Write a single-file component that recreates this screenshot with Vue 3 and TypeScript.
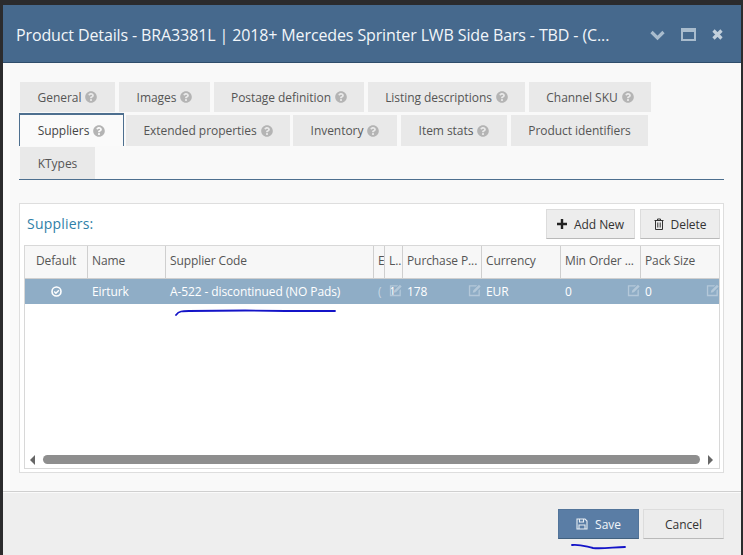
<script setup lang="ts">
const helpPath =
  'M504 256c0 137-111 248-248 248S8 393 8 256C8 119 119 8 256 8s248 111 248 248zM263 90c-54 0-89 23-117 64-3 5-2 12 3 16l35 26c5 4 13 3 17-2 18-23 30-36 57-36 20 0 46 13 46 33 0 15-12 23-33 34-24 13-55 30-55 71v4c0 7 5 12 12 12h56c7 0 12-5 12-12v-1c0-29 83-30 83-107 0-58-60-102-116-102zM256 338c-25 0-46 21-46 46s21 46 46 46 46-21 46-46-21-46-46-46z'
const editPath = 'M1 2.500h9.500L9 4H2.500v9.500H12V8.500l1.500-1.500V15H1zM6 8.500l6.500-6.500L14.500 4 8 10.500l-2.600.6z'

interface Tab { label: string; width: number; help: boolean; active?: boolean; after: number }
const rows: Tab[][] = [
  [
    { label: 'General', width: 95, help: true, after: 4 },
    { label: 'Images', width: 91, help: true, after: 4 },
    { label: 'Postage definition', width: 150, help: true, after: 4 },
    { label: 'Listing descriptions', width: 157, help: true, after: 4 },
    { label: 'Channel SKU', width: 122, help: true, after: 0 },
  ],
  [
    { label: 'Suppliers', width: 105, help: true, active: true, after: 2 },
    { label: 'Extended properties', width: 164, help: true, after: 3 },
    { label: 'Inventory', width: 104, help: true, after: 4 },
    { label: 'Item stats', width: 106, help: true, after: 4 },
    { label: 'Product identifiers', width: 137, help: false, after: 0 },
  ],
  [{ label: 'KTypes', width: 75, help: false, after: 0 }],
]

interface Col { head: string; cell: string; width: number; edit: boolean; center?: boolean; faint?: boolean }
const cols: Col[] = [
  { head: 'Default', cell: '', width: 63, edit: false, center: true },
  { head: 'Name', cell: 'Eirturk', width: 78, edit: false },
  { head: 'Supplier Code', cell: 'A-522 - discontinued (NO Pads)', width: 208, edit: false },
  { head: 'E', cell: '(', width: 11, edit: false, faint: true },
  { head: 'L..', cell: '1', width: 18, edit: true },
  { head: 'Purchase P...', cell: '178', width: 79, edit: true },
  { head: 'Currency', cell: 'EUR', width: 79, edit: false },
  { head: 'Min Order ...', cell: '0', width: 80, edit: true },
  { head: 'Pack Size', cell: '0', width: 79, edit: true },
]
</script>

<template>
  <div class="screen">
    <section class="dialog">
      <header class="titlebar">
        <h1 class="title">Product Details - BRA3381L | 2018+ Mercedes Sprinter LWB Side Bars - TBD - (C...</h1>
        <div class="controls">
          <svg width="15" height="12" viewBox="0 0 15 12"><path d="M1.500 3l6 6 6-6" fill="none" stroke="#a9bccd" stroke-width="3.200" /></svg>
          <svg width="15" height="13" viewBox="0 0 15 13"><path d="M1 1h13v11H1z M1 3h13" fill="none" stroke="#a9bccd" stroke-width="2" /></svg>
          <svg width="11" height="11" viewBox="0 0 11 11"><path d="M1.500 1.500l8 8M9.500 1.500l-8 8" fill="none" stroke="#c3d0dc" stroke-width="3.200" /></svg>
        </div>
      </header>

      <main class="body">
        <nav class="tabs">
          <div v-for="(row, r) in rows" :key="r" class="tab-row" :class="'tab-row-' + r">
            <button
              v-for="tab in row"
              :key="tab.label"
              class="tab"
              :class="{ active: tab.active }"
              :style="{ width: tab.width + 'px', marginRight: tab.after + 'px' }"
            >
              {{ tab.label }}
              <svg v-if="tab.help" class="help" viewBox="0 0 512 512"><path :d="helpPath" /></svg>
            </button>
          </div>
        </nav>

        <section class="panel">
          <div class="panel-head">
            <span class="panel-title">Suppliers:</span>
            <div class="panel-actions">
              <button class="btn add">
                <svg width="10" height="10" viewBox="0 0 10 10"><path d="M5 0v10M0 5h10" stroke="#222" stroke-width="2.400" /></svg>
                Add New
              </button>
              <button class="btn del">
                <svg width="10" height="12" viewBox="0 0 10 12"><path d="M.5 2.500h9M3.500 2.500V1h3v1.500M1.500 2.500V11.500h7V2.500M3.800 4.500v5M6.200 4.500v5" fill="none" stroke="#333" /></svg>
                Delete
              </button>
            </div>
          </div>

          <div class="grid">
            <div class="grid-row head">
              <div v-for="c in cols" :key="c.head" class="th" :class="{ center: c.center }" :style="{ width: c.width + 'px' }">{{ c.head }}</div>
            </div>
            <div class="grid-row selected">
              <div v-for="c in cols" :key="c.head" class="td" :class="{ center: c.center, faint: c.faint }" :style="{ width: c.width + 'px' }">
                <svg v-if="c.center" width="11" height="11" viewBox="0 0 11 11">
                  <circle cx="5.500" cy="5.500" r="4.500" fill="none" stroke="#fff" stroke-width="1.600" />
                  <path d="M3.200 5.500l1.700 1.700 3-3" fill="none" stroke="#fff" stroke-width="1.500" />
                </svg>
                <span class="cell-text">{{ c.cell }}</span>
                <svg v-if="c.edit" class="edit" viewBox="0 0 16 16"><path :d="editPath" /></svg>
              </div>
            </div>
            <div class="grid-fill"></div>
            <div class="scrollbar">
              <span class="arrow left"></span>
              <span class="thumb"></span>
              <span class="arrow right"></span>
            </div>
          </div>
          <svg class="scribble code-scribble" width="165" height="10" viewBox="0 0 165 10">
            <path d="M1 7C4 3 7 3 14 3L70 2.500 110 3 160 3" fill="none" stroke="#1414c8" stroke-width="1.800" stroke-linecap="round" />
          </svg>
        </section>
      </main>

      <footer class="footer">
        <button class="btn save">
          <svg width="12" height="12" viewBox="0 0 12 12"><path d="M1 1h8l2 2v8H1zM3.500 1v3h4V1M3 11V7h6v4" fill="none" stroke="#e8eef4" stroke-width="1.100" /></svg>
          Save
        </button>
        <button class="btn cancel">Cancel</button>
        <svg class="scribble save-scribble" width="56" height="8" viewBox="0 0 56 8">
          <path d="M1 2C8 1 13 3 22 5 32 6 44 4 54 4" fill="none" stroke="#1414c8" stroke-width="1.800" stroke-linecap="round" />
        </svg>
      </footer>
    </section>
  </div>
</template>

<style>
html, body { margin: 0; background: #2b2b2d; }
</style>

<style scoped>
.screen {
  width: 743px;
  height: 555px;
  box-sizing: border-box;
  padding: 5px 2px 0 3px;
  background: #2b2b2d;
  overflow: hidden;
  font-family: "Open Sans", "Liberation Sans", sans-serif;
}
.dialog {
  height: 550px;
  display: flex;
  flex-direction: column;
  background: #f9f9f9;
}
.titlebar {
  height: 58px;
  flex: none;
  box-sizing: border-box;
  display: flex;
  align-items: center;
  padding: 2px 18px 0 13px;
  background: #46698d;
  border-bottom: 1px solid #2f4d6b;
}
.title {
  margin: 0;
  flex: 1;
  font-size: 16px;
  letter-spacing: -0.12px;
  font-weight: 400;
  color: #f2f6fa;
  white-space: nowrap;
}
.controls {
  display: flex;
  align-items: center;
  gap: 16px;
}
.body {
  flex: 1;
  min-height: 0;
  padding: 19px 17px 18px 16px;
  display: flex;
  flex-direction: column;
  border-bottom: 1px solid #cfcfcf;
}
.tabs {
  height: 97px;
  box-sizing: content-box;
  border-bottom: 1px solid #4d6f8f;
  display: flex;
  flex-direction: column;
}
.tab-row {
  display: flex;
  height: 32px;
}
.tab-row-0 { padding-left: 1px; height: 32px; }
.tab-row-1 { height: 33px; }
.tab-row-2 { padding-left: 1px; height: 32px; }
.tab {
  height: 30px;
  box-sizing: border-box;
  padding: 0;
  border: 0;
  background: #e9e9e9;
  color: #555;
  font: 400 12px "Open Sans", "Liberation Sans", sans-serif;
  letter-spacing: -0.05px;
  display: flex;
  align-items: center;
  justify-content: center;
  gap: 4px;
  white-space: nowrap;
  flex: none;
}
.tab-row-1 .tab { height: 31px; margin-top: 1px; }
.tab-row-2 .tab { height: 32px; }
.tab-row-1 .tab.active {
  height: 33px;
  margin-top: -1px;
  background: #fafafa;
  border: 1px solid #4d6f8f;
  border-bottom: 0;
  border-top-width: 2px;
  color: #444;
}
.help {
  width: 12px;
  height: 12px;
  fill: #b4b4b4;
  flex: none;
}
.panel {
  position: relative;
  margin-top: 23px;
  height: 270px;
  box-sizing: border-box;
  border: 1px solid #dedede;
  background: #fff;
  padding: 5px 3px 3px 4px;
  display: flex;
  flex-direction: column;
}
.panel-head {
  height: 36px;
  flex: none;
  display: flex;
  justify-content: space-between;
}
.panel-title {
  padding: 5px 0 0 3px;
  font-size: 14px;
  letter-spacing: 0.2px;
  color: #2f7fa8;
}
.panel-actions {
  display: flex;
  gap: 5px;
  height: 30px;
}
.btn {
  box-sizing: border-box;
  height: 30px;
  padding: 0;
  display: flex;
  align-items: center;
  justify-content: center;
  gap: 7px;
  font: 400 12px "Open Sans", "Liberation Sans", sans-serif;
  letter-spacing: -0.05px;
  color: #333;
  background: #ededed;
  border: 1px solid #dcdcdc;
  border-bottom: 1px solid #b9b9b9;
}
.add { width: 89px; }
.del { width: 80px; }
.grid {
  flex: 1;
  min-height: 0;
  border: 1px solid #d8d8d8;
  display: flex;
  flex-direction: column;
}
.grid-row {
  display: flex;
  flex: none;
}
.head {
  height: 33px;
  background: #f7f7f7;
  border-bottom: 1px solid #cfcfcf;
  box-sizing: border-box;
}
.th, .td {
  box-sizing: border-box;
  flex: none;
  padding-left: 4px;
  display: flex;
  align-items: center;
  font-size: 12px;
  letter-spacing: -0.1px;
  white-space: nowrap;
  overflow: hidden;
  position: relative;
}
.th {
  color: #555;
  padding-bottom: 3px;
  border-right: 1px solid #cfcfcf;
}
.th:last-child { border-right: 0; }
.center { justify-content: center; padding-left: 0; }
.selected {
  height: 25px;
  background: #8fadc6;
  color: #fff;
}
.td { color: #fff; }
.td.faint { color: #c6d6e3; }
.cell-text { flex: 1; }
.center .cell-text { display: none; }
.edit {
  position: absolute;
  right: 0;
  top: 4px;
  width: 14px;
  height: 14px;
  fill: #b4c8d9;
}
.grid-fill { flex: 1; }
.scrollbar {
  height: 17px;
  flex: none;
  display: flex;
  align-items: center;
  padding: 0 6px 0 5px;
  gap: 8px;
}
.thumb {
  flex: 1;
  height: 9px;
  border-radius: 5px;
  background: #8e8e8e;
}
.arrow {
  width: 0;
  height: 0;
  border-top: 5px solid transparent;
  border-bottom: 5px solid transparent;
}
.arrow.left { border-right: 5px solid #666; }
.arrow.right { border-left: 5px solid #666; }
.footer {
  position: relative;
  flex: none;
  height: 63px;
  box-sizing: border-box;
  background: #eeeeee;
  display: flex;
  justify-content: flex-end;
  gap: 4px;
  padding: 16px 17px 0 0;
  border-top: 1px solid #fafafa;
}
.save {
  width: 81px;
  background: #5a7da5;
  border-color: #52749a;
  border-bottom-color: #41607f;
  color: #f2f5f9;
}
.cancel {
  width: 81px;
  background: #ececec;
}
.scribble { position: absolute; }
.code-scribble { left: 155px; top: 104px; }
.save-scribble { left: 568px; top: 50px; }
</style>
